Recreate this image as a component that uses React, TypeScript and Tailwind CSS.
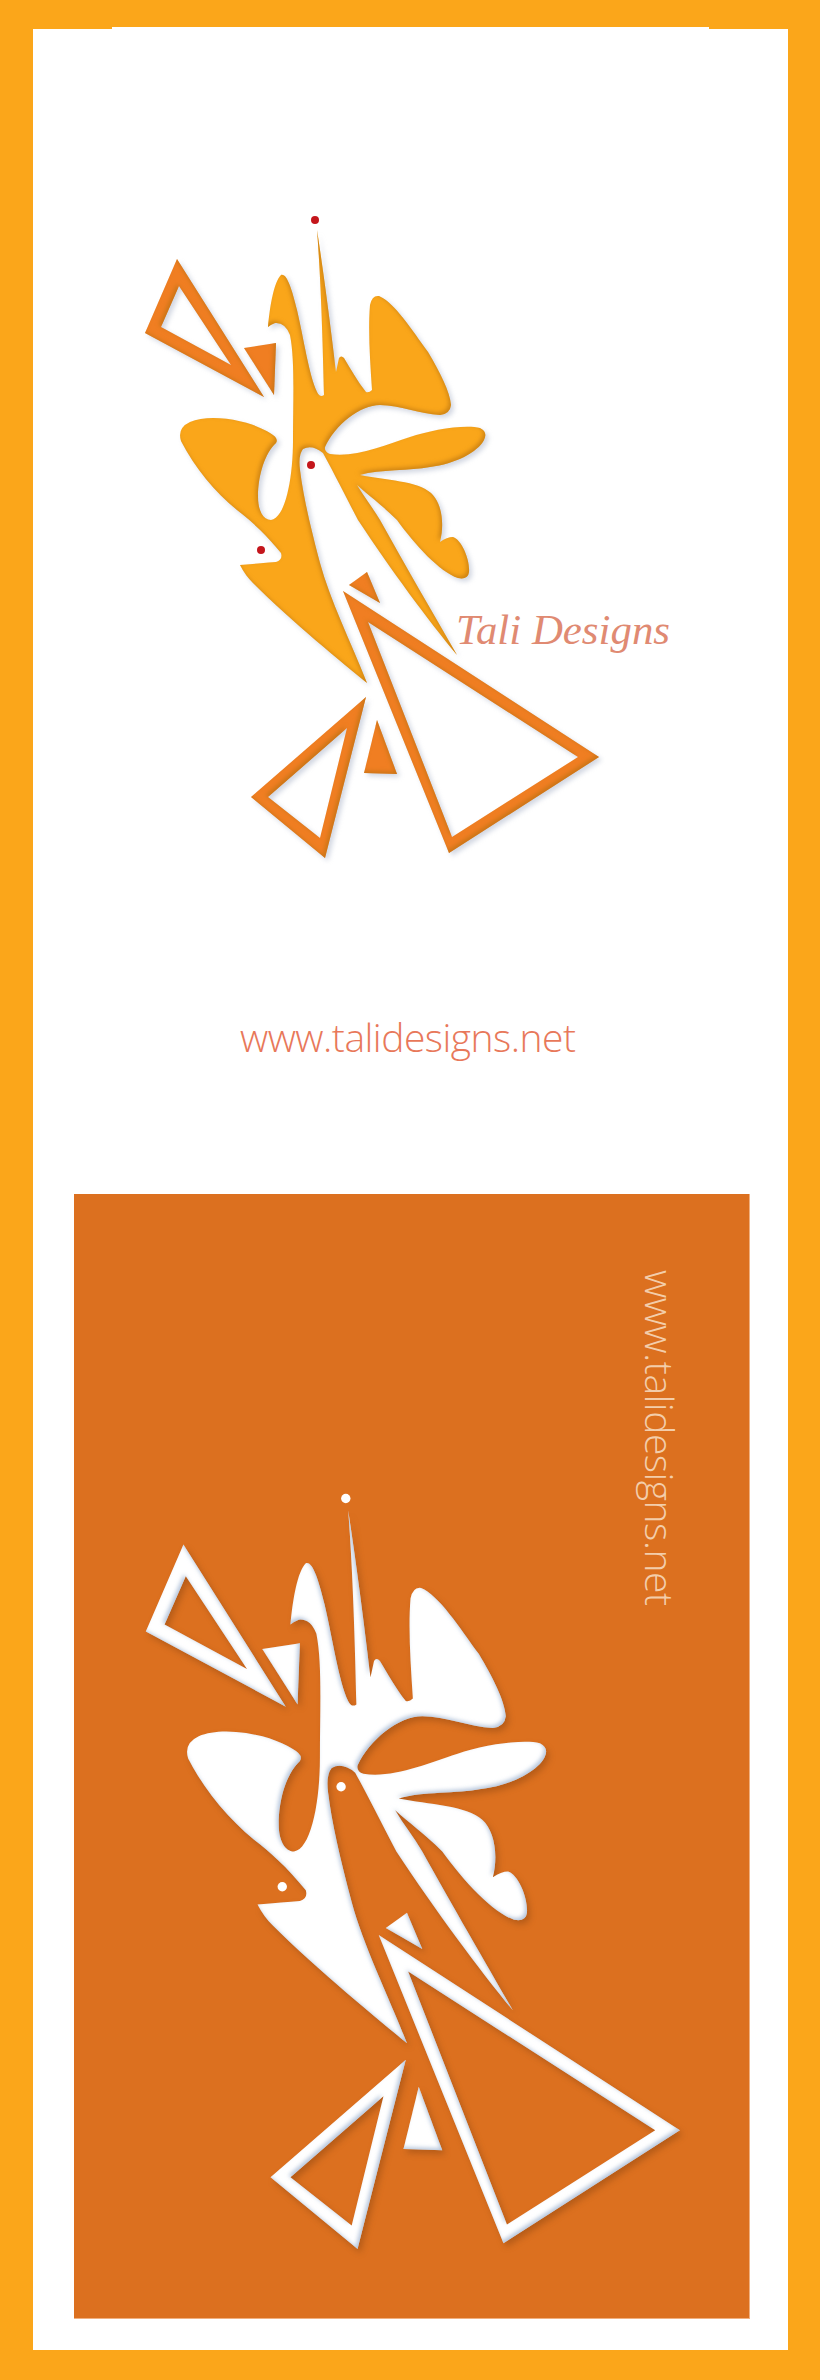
import React from 'react';

const BODY_PATH = `M268,327 C270,305 274,282 281,275 C287,273 292,290 297,310 C304,340 309,375 317,392 Q320,398 324,395
C323,350 321,280 317,230 C322,262 330,320 336,372 L339,358 Q341,355 344,358 C350,368 358,382 366,392 Q369,393 372,390
C370,360 368,330 370,305 Q372,295 379,296 C394,302 412,330 428,352 C440,372 450,392 451,405 Q450,414 440,415
C420,414 400,405 380,405 C360,405 335,425 325,447 Q324,452 330,454 C355,458 385,445 410,437 C430,430 465,424 480,428
Q488,432 484,440 C478,452 455,464 430,467 C410,471 380,469 360,475 C385,480 418,481 431,493 C441,502 445,522 440,542
Q447,537 453,537 C462,540 470,560 469,572 Q468,580 458,578 C440,572 415,545 397,520 C382,505 368,495 357,485
C364,497 373,508 380,520 C405,565 434,615 457,655 C428,620 391,570 358,520 C345,495 335,475 323,453 Q312,444 303,449
Q298,455 300,470 C303,495 310,525 320,563 C330,600 350,640 367,683 C345,665 290,620 253,583 Q245,575 240,565
Q262,563 276,562 Q283,560 281,553 C265,533 250,520 237,510 C215,492 195,468 181,441 Q177,428 190,422
C210,413 250,420 270,433 Q279,438 276,443 C265,453 258,475 258,497 C258,510 263,520 271,520 C285,518 293,480 293,440
C293,400 295,360 290,335 Q285,322 275,323 Q270,325 268,327 Z`;

const TRIANGLES = [
  'M177,259 L145,333 L264,397 Z M179,286 L231,365 L161,327 Z',
  'M244,348 L276,343 L274,395 Z',
  'M343,591 L599,757 L449,853 Z M368,622 L452,837 L578,757 Z',
  'M349,585 L367,572 L380,603 Z',
  'M366,697 L251,797 L325,858 Z M347,728 L320,838 L268,797 Z',
  'M377,720 L364,773 L397,774 Z',
];

const DOTS = [
  [315, 220],
  [311, 465],
  [261, 550],
];

interface LogoProps {
  id: string;
  width: number;
  height: number;
  viewBox: string;
  bodyColor: string;
  triangleColor: string;
  dotColor: string;
  edgeColor: string;
  shadowColor: string;
  children?: React.ReactNode;
}

const Logo: React.FC<LogoProps> = ({ id, width, height, viewBox, bodyColor, triangleColor, dotColor, edgeColor, shadowColor, children }) => (
  <svg width={width} height={height} viewBox={viewBox} className="block">
    <defs>
      <filter id={id} x="-10%" y="-10%" width="120%" height="120%" colorInterpolationFilters="sRGB">
        <feGaussianBlur in="SourceAlpha" stdDeviation="2.8" result="soft" />
        <feOffset in="soft" dx="2.5" dy="3" result="softOffset" />
        <feFlood floodColor={shadowColor} floodOpacity="0.35" />
        <feComposite in2="softOffset" operator="in" result="shadow" />
        <feGaussianBlur in="SourceAlpha" stdDeviation="2" result="tight" />
        <feOffset in="tight" dx="-1.6" dy="-1.8" result="tightOffset" />
        <feComposite in="SourceAlpha" in2="tightOffset" operator="out" result="rim" />
        <feFlood floodColor={edgeColor} floodOpacity="0.65" />
        <feComposite in2="rim" operator="in" result="edge" />
        <feMerge>
          <feMergeNode in="shadow" />
          <feMergeNode in="SourceGraphic" />
          <feMergeNode in="edge" />
        </feMerge>
      </filter>
    </defs>
    <g filter={`url(#${id})`}>
      <path d={BODY_PATH} fill={bodyColor} />
      {TRIANGLES.map((d) => (
        <path key={d} d={d} fill={triangleColor} fillRule="evenodd" />
      ))}
    </g>
    {DOTS.map(([cx, cy]) => (
      <circle key={cx} cx={cx} cy={cy} r="4" fill={dotColor} />
    ))}
    {children}
  </svg>
);

export default function App() {
  return (
    <div className="w-[820px] h-[2380px] bg-[#FBA61A] pt-[27px] pl-[33px] overflow-hidden">
      <div className="w-[755px]">
        {/* the white sheet has a small step along its top edge */}
        <div className="h-[2px] mx-[79px] bg-white" />
        <div className="h-[2321px] bg-white">
          <div className="h-[1165px] pt-[171px] pl-[97px]">
            <Logo
              id="logo-top"
              width={550}
              height={680}
              viewBox="130 200 550 680"
              bodyColor="#FAA61A"
              triangleColor="#F07E22"
              dotColor="#C4161C"
              edgeColor="#B5700F"
              shadowColor="#7F8DAB"
            >
              <text
                x="456"
                y="644"
                textLength="214"
                lengthAdjust="spacingAndGlyphs"
                fill="#E08A72"
                className="font-['Liberation_Serif',serif] italic text-[42px]"
              >
                Tali Designs
              </text>
            </Logo>
            <p className="mt-[132px] ml-[110px] font-['Open_Sans',sans-serif] font-light text-[39px] leading-[50px] tracking-[-0.5px] text-[#E8785A] whitespace-nowrap">
              www.talidesigns.net
            </p>
          </div>
          <div className="relative w-[676px] h-[1125px] ml-[41px] pt-[281px] pl-[54px] bg-[#DC701F] border-r border-b border-[#F0B080]">
            <Logo
              id="logo-bottom"
              width={565}
              height={800}
              viewBox="130 200 480 680"
              bodyColor="#FFFFFF"
              triangleColor="#FFFFFF"
              dotColor="#FFFFFF"
              edgeColor="#8FA7C9"
              shadowColor="#6E360C"
            />
            <p className="absolute top-[76px] left-[561px] [writing-mode:vertical-rl] font-['Open_Sans',sans-serif] font-light text-[39px] leading-[50px] tracking-[-0.5px] text-[#F3CDAA] whitespace-nowrap">
              www.talidesigns.net
            </p>
          </div>
        </div>
      </div>
    </div>
  );
}
